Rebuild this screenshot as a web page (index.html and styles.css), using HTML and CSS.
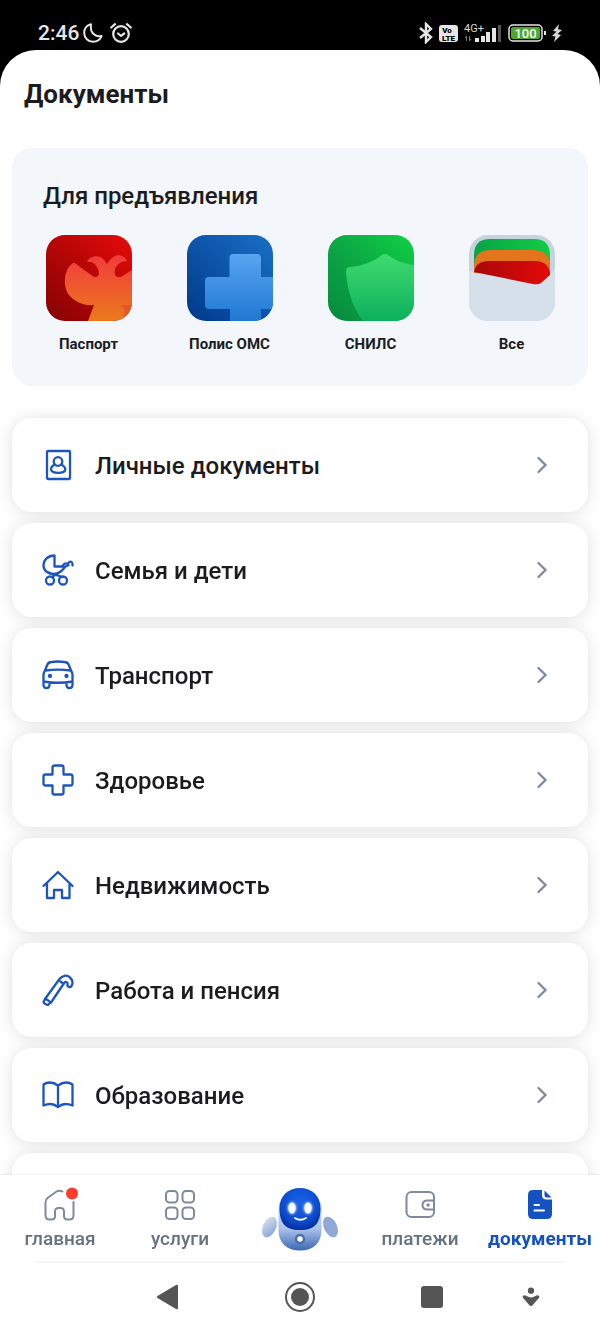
FILE: index.html
```html
<!DOCTYPE html>
<html lang="ru">
<head>
  <meta charset="UTF-8">
  <meta name="viewport" content="width=device-width, initial-scale=1.0">
  <title>Документы</title>
  <link rel="stylesheet" href="styles.css">
</head>
<body>
  <div class="status-bar">
    <div class="status-left">
      <span class="time">2:46</span>
      <svg width="20" height="20" viewBox="0 0 20 20" fill="none" stroke="#e6e6e6" stroke-width="2" stroke-linejoin="round"><path d="M8 1.300C3.500 2.200 1.200 6 1.200 9.800C1.200 15 5.200 18.800 10 18.800C14 18.800 17.300 16.600 18.600 13C13 14.500 6.500 10 8 1.300z"/></svg>
      <svg class="alarm" width="22" height="20" viewBox="0 0 22 20" fill="none" stroke="#e6e6e6" stroke-width="2.200" stroke-linecap="round"><circle cx="11" cy="11" r="7.800"/><path d="M1.200 4.500L5 1.200M20.800 4.500L17 1.200"/><path d="M8 10.500l3 2.300 3.200-2.300"/></svg>
    </div>
    <div class="status-right">
      <svg width="14" height="22" viewBox="0 0 14 22" fill="none" stroke="#e6e6e6" stroke-width="2.400"><path d="M1 6l11 9-5 5V2l5 5L1 16"/></svg>
      <svg width="19" height="17" viewBox="0 0 19 17"><rect width="19" height="17" rx="3" fill="#e6e6e6"/><text x="8" y="8" text-anchor="middle" class="volte">Vo</text><text x="9.500" y="15.500" text-anchor="middle" class="volte">LTE</text></svg>
      <svg class="signal" width="38" height="20" viewBox="0 0 38 20"><text x="0" y="9" class="net">4G+</text><g fill="#e6e6e6"><rect x="11" y="15" width="4" height="4"/><rect x="17" y="13" width="4" height="6"/><rect x="22" y="9" width="4" height="10"/><rect x="28" y="5" width="4" height="14"/></g><rect x="34" y="2" width="3" height="17" fill="#555"/><path d="M2.500 18v-5l-1.500 2M5.500 13v5l1.500-2" fill="none" stroke="#777"/></svg>
      <svg width="38" height="18" viewBox="0 0 38 18"><rect x="1" y="1" width="33" height="16" rx="4" fill="#000" stroke="#e6e6e6" stroke-width="1.500"/><rect x="3" y="3" width="29" height="12" rx="2" fill="#4ca92b"/><rect x="36" y="7" width="2" height="4" fill="#e6e6e6"/><text x="17.500" y="13.500" text-anchor="middle" class="charge">100</text></svg>
      <svg width="10" height="18" viewBox="0 0 10 18" fill="#d8d8d8"><path d="M7 0L1 7l3.500.500L0 12l3.500.500L2 18l7-7-3.500-1L10 6l-4-.800z"/></svg>
    </div>
  </div>

  <div class="sheet">
    <main class="content">
      <h1>Документы</h1>

      <section class="panel">
        <h2>Для предъявления</h2>
        <div class="tiles">
          <a class="tile" href="#">
            <svg width="86" height="86" viewBox="0 0 86 86">
              <defs>
                <clipPath id="tileClip"><rect width="86" height="86" rx="19"/></clipPath>
                <linearGradient id="redBg" x1="0" y1="1" x2="1" y2="0"><stop offset="0" stop-color="#840202"/><stop offset="1" stop-color="#e60a0a"/></linearGradient>
                <linearGradient id="eagle" x1="0" y1="0" x2="0" y2="1"><stop offset="0" stop-color="#f23b3d"/><stop offset="1" stop-color="#ea7a1c"/></linearGradient>
              </defs>
              <g clip-path="url(#tileClip)">
                <rect width="86" height="86" fill="url(#redBg)"/>
                <path fill="url(#eagle)" d="M27 28C29 27 31 30 34 32L48 42C53 43 54 38 52 34C50 29 46 26 41 27C43 22 50 20 54 22C57 23 59 26 61 29C63 26 65 23 69 21C74 19 79 22 81 26C75 26 71 29 69 34C68 39 69 43 75 42L86 35V70H76L86 86H42L48 70C36 71 28 66 23 60C17 52 17 35 27 28z"/>
                <path d="M75 70h11v8c-4 2-7 2-10 3 4-3 3-7-1-11z" fill="#e05a28"/>
              </g>
            </svg>
            <span>Паспорт</span>
          </a>
          <a class="tile" href="#">
            <svg width="86" height="86" viewBox="0 0 86 86">
              <defs>
                <linearGradient id="blueBg" x1="0" y1="1" x2="1" y2="0"><stop offset="0" stop-color="#00398a"/><stop offset="1" stop-color="#1a6fc6"/></linearGradient>
                <linearGradient id="cross" x1="0" y1="0" x2="0" y2="1"><stop offset="0" stop-color="#58a5f2"/><stop offset="1" stop-color="#1e76d0"/></linearGradient>
              </defs>
              <g clip-path="url(#tileClip)">
                <rect width="86" height="86" fill="url(#blueBg)"/>
                <path fill="url(#cross)" d="M46 19h24q4 0 4 4v19h14v32H74v14H43V74H22q-4 0-4-4V46q0-4 4-4h20.500V23q0-4 3.500-4z"/>
              </g>
            </svg>
            <span>Полис ОМС</span>
          </a>
          <a class="tile" href="#">
            <svg width="86" height="86" viewBox="0 0 86 86">
              <defs>
                <linearGradient id="greenBg" x1="0" y1="1" x2="1" y2="0"><stop offset="0" stop-color="#06893f"/><stop offset=".5" stop-color="#0ca746"/><stop offset="1" stop-color="#0fd142"/></linearGradient>
                <linearGradient id="shield" x1="0" y1="0" x2="0" y2="1"><stop offset="0" stop-color="#3fdb70"/><stop offset="1" stop-color="#0cae5c"/></linearGradient>
              </defs>
              <g clip-path="url(#tileClip)">
                <rect width="86" height="86" fill="url(#greenBg)"/>
                <path fill="url(#shield)" d="M54 20q3-2 6 0C68 26 77 29 87 30V88H37C26 76 19 57 18 36q0-4 4-4C34 31 45 27 54 20z"/>
              </g>
            </svg>
            <span>СНИЛС</span>
          </a>
          <a class="tile" href="#">
            <svg width="86" height="86" viewBox="0 0 86 86">
              <defs>
                <linearGradient id="cardGreen" x1="0" y1="0" x2="1" y2="0"><stop offset="0" stop-color="#08a445"/><stop offset="1" stop-color="#10cc45"/></linearGradient>
                <linearGradient id="cardRed" x1="0" y1="0" x2="1" y2="0"><stop offset="0" stop-color="#a80808"/><stop offset="1" stop-color="#e20a08"/></linearGradient>
              </defs>
              <g clip-path="url(#tileClip)">
                <rect width="86" height="86" fill="#c7d2e0"/>
                <path d="M0 36L66 50Q70 50 81 40L86 34V86H0z" fill="#d6e0eb"/>
                <path d="M5 37V20Q5 4 21 4H65Q81 4 81 20V36z" fill="url(#cardGreen)"/>
                <path d="M5 38V32Q5 15 21 15H65Q81 15 81 32V38z" fill="#e5751c"/>
                <path d="M5 37Q7 26 20 26H66Q79 26 81 38V40L72 48Q69 50 64 49z" fill="url(#cardRed)"/>
              </g>
            </svg>
            <span>Все</span>
          </a>
        </div>
      </section>

      <ul class="list">
        <li><a class="card" href="#">
          <svg class="icon" viewBox="0 0 32 32"><rect x="5" y="2" width="23" height="28" rx="1"/><circle cx="16" cy="12.500" r="4.300"/><path d="M12.800 15.500C10 17 8.800 18.600 9 20.500C9.500 22.800 13 23.800 16.300 23.800S23 22.800 23.300 20.500C23.500 18.600 22 17 19.300 15.500"/></svg>
          <span>Личные документы</span>
          <svg class="chevron" viewBox="0 0 12 18"><path d="M2.500 2L9.500 9 2.500 16"/></svg>
        </a></li>
        <li><a class="card" href="#">
          <svg class="icon" viewBox="0 0 32 32"><path d="M12.500 1.500V12.500H21.500M12.500 1.500C6 1.500 1.500 6 1.500 11.500C1.500 16.500 6 20 11 20C19 20 21 15 23.500 12.500C25 11 26 12 26.500 11C25 7.500 29.500 6.500 30.500 9.500V11.500M26 10.500C23.500 7.500 21.500 11 20 12.500M5.500 18L11 20L20.500 23M20 16.500L10 23"/><circle cx="8" cy="26.500" r="4"/><circle cx="21" cy="26.500" r="4"/></svg>
          <span>Семья и дети</span>
          <svg class="chevron" viewBox="0 0 12 18"><path d="M2.500 2L9.500 9 2.500 16"/></svg>
        </a></li>
        <li><a class="card" href="#">
          <svg class="icon" viewBox="0 0 32 32"><path d="M1.500 25V15L5 6.500Q6 3 9.500 3Q16 2 22.500 3Q26 3 27 6.500L30.500 15V25M3.500 11.500Q16 9.800 28.500 11.500M1.500 22.500Q16 25 30.500 22.500M1.500 24V26Q1.500 29 4.500 29T7.500 26V24M24.500 24V26Q24.500 29 27.500 29T30.500 26V24"/><circle cx="8" cy="17" r="1" fill="#1d56ba"/><circle cx="24.500" cy="17" r="1" fill="#1d56ba"/></svg>
          <span>Транспорт</span>
          <svg class="chevron" viewBox="0 0 12 18"><path d="M2.500 2L9.500 9 2.500 16"/></svg>
        </a></li>
        <li><a class="card" href="#">
          <svg class="icon" viewBox="0 0 32 32"><path d="M13 1.500H19.500Q21.500 1.500 21.500 3.500V10.500H28.500Q30.500 10.500 30.500 12.500V19.500Q30.500 21.500 28.500 21.500H21.500V28.500Q21.500 30.500 19.500 30.500H12.500Q10.500 30.500 10.500 28.500V21.500H3.500Q1.500 21.500 1.500 19.500V12.500Q1.500 10.500 3.500 10.500H10.500V3.500Q10.500 1.500 13 1.500z"/></svg>
          <span>Здоровье</span>
          <svg class="chevron" viewBox="0 0 12 18"><path d="M2.500 2L9.500 9 2.500 16"/></svg>
        </a></li>
        <li><a class="card" href="#">
          <svg class="icon" viewBox="0 0 32 32"><path d="M1.500 17L16 3 30.500 17M5 14V29H12V21H20V29H27.500V14"/></svg>
          <span>Недвижимость</span>
          <svg class="chevron" viewBox="0 0 12 18"><path d="M2.500 2L9.500 9 2.500 16"/></svg>
        </a></li>
        <li><a class="card" href="#">
          <svg class="icon" viewBox="0 0 32 32"><path d="M3 25L17.500 5C20 1.500 25 .500 28 3.500C31 6 31 10 29.500 12C28 14 25 13 25.500 10.500C26 8.500 24 7 22.500 8.500L9 28.500M18.500 7.500L21 9.500M3 25Q5 25 8.500 28.500M3 25L1.500 28Q2 30 6 31L8.500 28.500"/></svg>
          <span>Работа и пенсия</span>
          <svg class="chevron" viewBox="0 0 12 18"><path d="M2.500 2L9.500 9 2.500 16"/></svg>
        </a></li>
        <li><a class="card" href="#">
          <svg class="icon" viewBox="0 0 32 32"><path d="M16 6.500Q12 3.500 8 3.500T1.500 5.500V26.500Q5 25 8.500 25T16 28Q20 25 23.500 25T30.500 26.500V5.500Q28 3.500 24 3.500T16 6.500zM16 6.500V27"/></svg>
          <span>Образование</span>
          <svg class="chevron" viewBox="0 0 12 18"><path d="M2.500 2L9.500 9 2.500 16"/></svg>
        </a></li>
        <li class="card"></li>
      </ul>
    </main>

    <nav class="tabs">
      <a class="tab" href="#">
        <svg width="32" height="34" viewBox="0 0 32 34"><path d="M18.500 3.500Q15.500 1.800 12.500 3.500L3.500 10Q1.500 11.500 1.500 14.500V27Q1.500 31.500 5.500 31.500H7.500Q11 31.500 11 28V23.500Q11 20 14.500 20H16.500Q20 20 20 23.500V28Q20 31.500 23.500 31.500H25.500Q29.500 31.500 29.500 27V14"/><circle cx="28" cy="5.500" r="6" fill="#ff3b30" stroke="none"/></svg>
        <span>главная</span>
      </a>
      <a class="tab" href="#">
        <svg width="32" height="34" viewBox="0 0 32 34"><rect x="2" y="3" width="11.500" height="11.500" rx="3.500"/><rect x="18.500" y="3" width="11.500" height="11.500" rx="3.500"/><rect x="2" y="19.500" width="11.500" height="11.500" rx="3.500"/><rect x="18.500" y="19.500" width="11.500" height="11.500" rx="3.500"/></svg>
        <span>услуги</span>
      </a>
      <a class="tab" href="#" aria-label="Робот Макс">
        <svg class="robot" width="78" height="64" viewBox="0 0 78 64">
          <defs>
            <linearGradient id="robotBody" x1="0" y1="0" x2="0" y2="1"><stop offset="0" stop-color="#d3dff2"/><stop offset=".55" stop-color="#a9c1ea"/><stop offset="1" stop-color="#3a67b4"/></linearGradient>
            <radialGradient id="robotFace" cx=".5" cy=".35" r=".65"><stop offset="0" stop-color="#1a63e6"/><stop offset=".7" stop-color="#0c4ccf"/><stop offset="1" stop-color="#062fa0"/></radialGradient>
            <radialGradient id="glow"><stop offset=".5" stop-color="#9cc4ff"/><stop offset="1" stop-color="#1a5ee0" stop-opacity="0"/></radialGradient>
            <linearGradient id="arm" x1="0" y1="0" x2="1" y2="1"><stop offset="0" stop-color="#dfe6f3"/><stop offset="1" stop-color="#7f9dd4"/></linearGradient>
          </defs>
          <path d="M17.500 15H60.500V42C60.500 55 52 62.500 39 62.500S17.500 55 17.500 42z" fill="url(#robotBody)"/>
          <ellipse cx="8.500" cy="39" rx="6.500" ry="11" transform="rotate(25 8.500 39)" fill="url(#arm)"/>
          <ellipse cx="69.500" cy="39" rx="6.500" ry="11" transform="rotate(-25 69.500 39)" fill="#8fa8d6"/>
          <path d="M39 0C51 0 59.500 8 59.500 20C59.500 34 55 42 39 42S18.500 34 18.500 20C18.500 8 27 0 39 0z" fill="url(#robotFace)"/>
          <ellipse cx="31" cy="20" rx="7" ry="9" fill="url(#glow)"/><ellipse cx="47" cy="20" rx="7" ry="9" fill="url(#glow)"/>
          <ellipse cx="31" cy="20" rx="3.500" ry="5.500" fill="#fff"/><ellipse cx="47" cy="20" rx="3.500" ry="5.500" fill="#fff"/>
          <path d="M34 30Q39 33.500 45 30" fill="none" stroke="#fff" stroke-width="1.800" stroke-linecap="round"/>
          <circle cx="39" cy="51" r="4" fill="#fff" stroke="#4b6fab" stroke-width="2.500"/>
        </svg>
      </a>
      <a class="tab" href="#">
        <svg width="32" height="34" viewBox="0 0 32 34"><rect x="2.500" y="4" width="27.500" height="25" rx="5"/><path d="M30 12.500H23.500Q18.500 12.500 18.500 17T23.500 21.500H30"/><circle cx="24" cy="17" r="1.200" fill="#7f8a9f" stroke-width="1"/></svg>
        <span>платежи</span>
      </a>
      <a class="tab active" href="#">
        <svg width="32" height="34" viewBox="0 0 32 34"><path d="M9 2H18V7Q18 11.500 22.500 11.500H28V26Q28 31 23 31H9Q4 31 4 26V7Q4 2 9 2z" fill="#1552c1" stroke="none"/><path d="M20.500 2.500L27.500 9.500H23Q20.500 9.500 20.500 7z" fill="#1552c1" stroke="none"/><path d="M10.500 17H15M10.500 22.500H20" stroke="#fff"/></svg>
        <span>документы</span>
      </a>
    </nav>

    <div class="system-nav">
      <button type="button" aria-label="Назад"><svg width="24" height="28" viewBox="0 0 24 28" fill="#555"><path d="M1.500 13L20 2Q22 1 22 3V25Q22 27 20 26L1.500 15Q0 14 1.500 13z"/></svg></button>
      <button type="button" aria-label="Домой"><svg width="32" height="32" viewBox="0 0 32 32"><circle cx="16" cy="16" r="14" fill="none" stroke="#555" stroke-width="2"/><circle cx="16" cy="16" r="9" fill="#555"/></svg></button>
      <button type="button" aria-label="Недавние"><svg width="22" height="22" viewBox="0 0 22 22"><rect width="22" height="22" rx="3" fill="#555"/></svg></button>
      <button type="button" aria-label="Свернуть"><svg width="18" height="20" viewBox="0 0 20 22" fill="#555"><circle cx="10" cy="4" r="3.500"/><path d="M1 10Q3 8 5 10Q10 13 15 10Q17 8 19 10Q20 12 18 13L12 20Q10 22 8 20L2 13Q0 12 1 10z"/></svg></button>
    </div>
  </div>
</body>
</html>
```
FILE: styles.css
```css
* {
  box-sizing: border-box;
}
body {
  margin: 0;
  height: 100vh;
  display: flex;
  flex-direction: column;
  background-color: #000;
  color: #1c1c1f;
  font-family: Roboto, "Noto Sans", sans-serif;
}
h1, h2, ul {
  margin: 0;
  padding: 0;
}
a {
  color: inherit;
  text-decoration: none;
}
svg {
  display: block;
  flex-shrink: 0;
}

/* status bar */
.status-bar {
  display: flex;
  justify-content: space-between;
  padding: 22px 38px 6px;
  color: #e6e6e6;
}
.status-left, .status-right {
  display: flex;
  align-items: center;
  height: 22px;
}
.status-left {
  gap: 4px;
}
.status-right {
  gap: 6px;
}
.time {
  font-size: 21px;
  line-height: 22px;
  font-weight: 500;
}
.alarm {
  margin-left: 3px;
}
.volte {
  font-size: 8px;
  font-weight: 900;
}
.net {
  font-size: 11px;
  fill: #d8d8d8;
}
.charge {
  font-size: 13px;
  font-weight: 500;
  fill: #fff;
}

/* page */
.sheet {
  flex: 1;
  min-height: 0;
  display: flex;
  flex-direction: column;
  background-color: #fff;
  border-radius: 36px 36px 0 0;
  overflow: hidden;
}
.content {
  flex: 1;
  min-height: 0;
  padding: 28px 12px 0;
  overflow: hidden;
}
h1 {
  padding-left: 12px;
  font-size: 26px;
  line-height: 32px;
  font-weight: 700;
}
.panel {
  margin-top: 38px;
  padding: 32px 6px 32px;
  background-color: #f3f6fb;
  border-radius: 20px;
}
h2 {
  padding-left: 25px;
  font-size: 24px;
  line-height: 32px;
  font-weight: 500;
}
.tiles {
  display: grid;
  grid-template-columns: repeat(4, 1fr);
  margin-top: 23px;
}
.tile {
  display: flex;
  flex-direction: column;
  align-items: center;
  gap: 13px;
  font-size: 15px;
  line-height: 20px;
  font-weight: 700;
}

/* categories */
.list {
  display: flex;
  flex-direction: column;
  gap: 11px;
  margin-top: 32px;
  list-style: none;
  filter: drop-shadow(0 1px 8px rgba(0, 0, 0, 0.12));
}
.card {
  display: flex;
  align-items: center;
  min-height: 94px;
  padding: 0 40px 0 30px;
  gap: 21px;
  background-color: #fff;
  border-radius: 20px;
  font-size: 24px;
  line-height: 32px;
  font-weight: 500;
}
.card span {
  flex: 1;
  padding-top: 2px;
}
.icon {
  width: 32px;
  height: 32px;
  fill: none;
  stroke: #1d56ba;
  stroke-width: 2.3;
  stroke-linecap: round;
  stroke-linejoin: round;
}
.chevron {
  width: 12px;
  height: 18px;
  fill: none;
  stroke: #7f8a9f;
  stroke-width: 2.3;
  stroke-linecap: round;
}

/* bottom navigation */
.tabs {
  display: grid;
  grid-template-columns: repeat(5, 1fr);
  height: 86px;
  padding-top: 13px;
  background-color: #fff;
  box-shadow: 0 0 3px rgba(0, 0, 0, 0.12);
  z-index: 1;
}
.tab {
  display: flex;
  flex-direction: column;
  align-items: center;
  gap: 5px;
  color: #66727f;
  font-size: 19px;
  line-height: 24px;
  font-weight: 500;
}
.tab svg {
  fill: none;
  stroke: #7f8a9f;
  stroke-width: 2;
  stroke-linecap: round;
  overflow: visible;
}
.tab .robot {
  stroke: none;
}
.active {
  color: #1552c1;
  font-weight: 700;
}
.system-nav {
  display: grid;
  grid-template-columns: 2fr 2fr 2fr 1fr;
  height: 71px;
  padding: 0 36px 0 102px;
  background: linear-gradient(#f5f5f7, #f5f5f7) center top / 88% 2px no-repeat #fff;
  z-index: 2;
}
.system-nav button {
  display: flex;
  align-items: center;
  justify-content: center;
  padding: 0;
  border: none;
  background: none;
}
```
